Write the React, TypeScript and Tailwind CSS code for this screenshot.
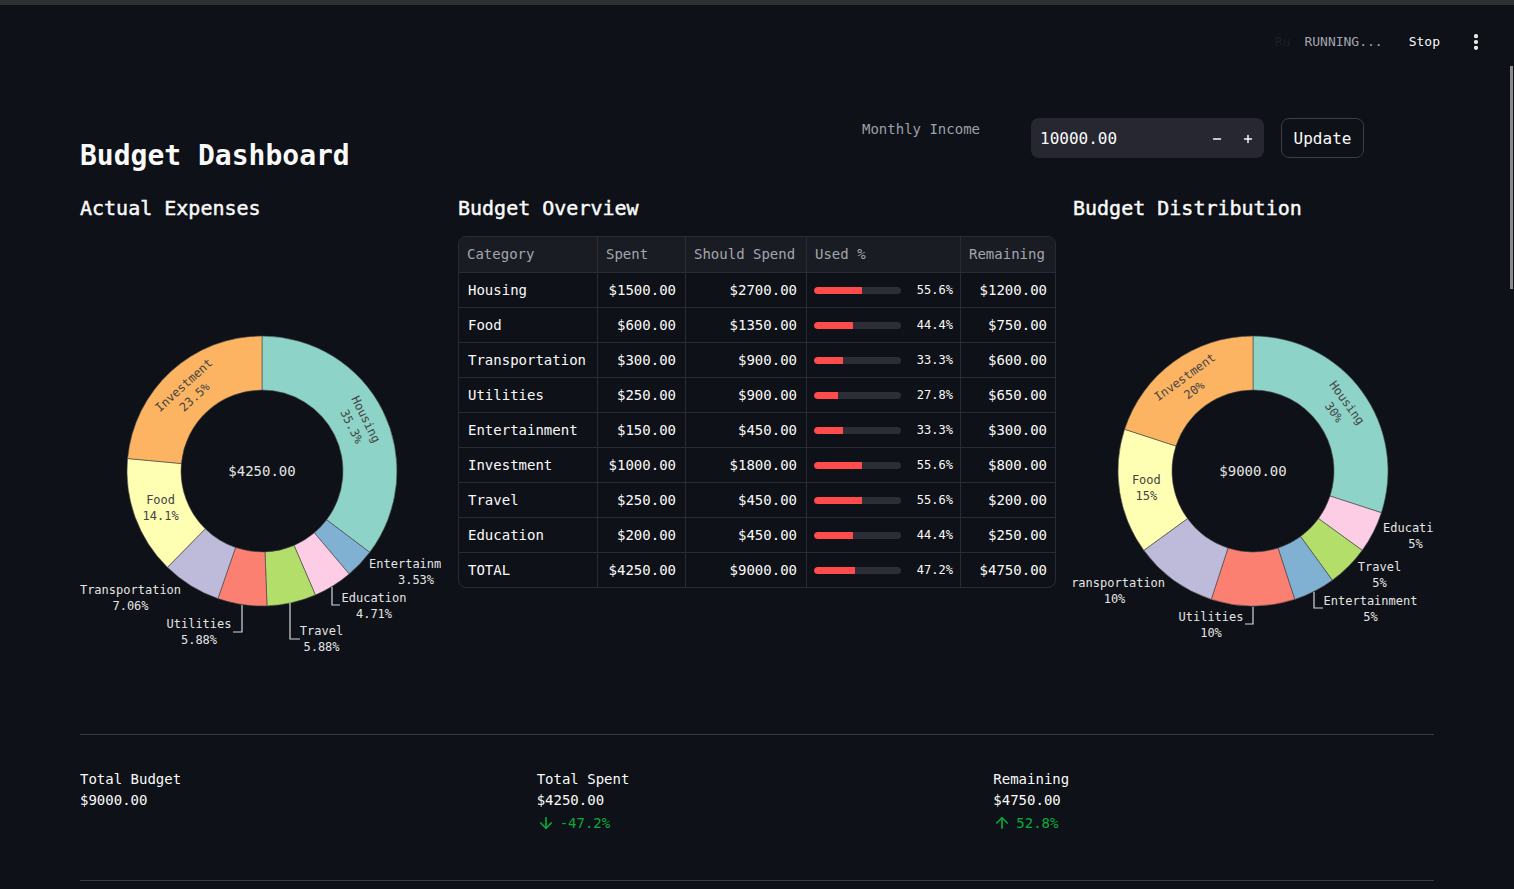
import { ArrowDown, ArrowUp, EllipsisVertical, Minus, Plus } from "lucide-react";

const COLORS: Record<string, string> = {
  Housing: "#8dd3c7",
  Food: "#ffffb3",
  Transportation: "#bebada",
  Utilities: "#fb8072",
  Entertainment: "#80b1d3",
  Investment: "#fdb462",
  Travel: "#b3de69",
  Education: "#fccde5",
};

type Slice = { name: string; value: number };
type OutLabel = { x: number; y: number; lines: [string, string] };
type InLabel = { name: string; horizontal?: boolean; lines: [string, string] };

interface DonutProps {
  cx: number;
  cy: number;
  slices: Slice[];
  center: string;
  inside: InLabel[];
  outside: OutLabel[];
  leaders: string[];
}

const R_OUT = 135;
const R_IN = 81;

function pt(cx: number, cy: number, r: number, deg: number) {
  const a = (deg * Math.PI) / 180;
  return [cx + r * Math.sin(a), cy - r * Math.cos(a)];
}

function arcPath(cx: number, cy: number, a0: number, a1: number) {
  const large = a1 - a0 > 180 ? 1 : 0;
  const [x0, y0] = pt(cx, cy, R_OUT, a0);
  const [x1, y1] = pt(cx, cy, R_OUT, a1);
  const [x2, y2] = pt(cx, cy, R_IN, a1);
  const [x3, y3] = pt(cx, cy, R_IN, a0);
  return `M${x0} ${y0} A${R_OUT} ${R_OUT} 0 ${large} 1 ${x1} ${y1} L${x2} ${y2} A${R_IN} ${R_IN} 0 ${large} 0 ${x3} ${y3} Z`;
}

function Donut({ cx, cy, slices, center, inside, outside, leaders }: DonutProps) {
  const total = slices.reduce((s, x) => s + x.value, 0);
  let acc = 0;
  const arcs = slices.map((s) => {
    const a0 = (acc / total) * 360;
    acc += s.value;
    const a1 = (acc / total) * 360;
    return { ...s, a0, a1 };
  });

  return (
    <svg className="w-full h-[470px]" fontSize={12}>
      {arcs.map((a) => (
        <path
          key={a.name}
          d={arcPath(cx, cy, a.a0, a.a1)}
          fill={COLORS[a.name]}
          stroke="#4a4a4a"
          strokeWidth={0.6}
        />
      ))}
      {inside.map((l) => {
        const a = arcs.find((x) => x.name === l.name)!;
        const mid = (a.a0 + a.a1) / 2;
        const [x, y] = pt(cx, cy, (R_OUT + R_IN) / 2, mid);
        const rot = l.horizontal ? 0 : mid > 180 ? mid - 360 : mid;
        return (
          <text
            key={l.name}
            transform={`translate(${x} ${y}) rotate(${rot})`}
            textAnchor="middle"
            fill="#444"
            dominantBaseline="central"
          >
            <tspan x={0} y={-8}>{l.lines[0]}</tspan>
            <tspan x={0} y={8}>{l.lines[1]}</tspan>
          </text>
        );
      })}
      {leaders.map((p) => (
        <polyline key={p} points={p} fill="none" stroke="#d8d8d8" strokeWidth={1.2} />
      ))}
      {outside.map((l) => (
        <text key={l.lines[0]} textAnchor="middle" fill="#e4e4e4" dominantBaseline="central">
          <tspan x={l.x} y={l.y}>{l.lines[0]}</tspan>
          <tspan x={l.x} y={l.y + 16}>{l.lines[1]}</tspan>
        </text>
      ))}
      <text x={cx} y={cy} textAnchor="middle" dominantBaseline="central" fontSize={14} fill="#e4e4e4">
        {center}
      </text>
    </svg>
  );
}

const rows = [
  { cat: "Housing", spent: 1500, should: 2700 },
  { cat: "Food", spent: 600, should: 1350 },
  { cat: "Transportation", spent: 300, should: 900 },
  { cat: "Utilities", spent: 250, should: 900 },
  { cat: "Entertainment", spent: 150, should: 450 },
  { cat: "Investment", spent: 1000, should: 1800 },
  { cat: "Travel", spent: 250, should: 450 },
  { cat: "Education", spent: 200, should: 450 },
  { cat: "TOTAL", spent: 4250, should: 9000 },
];

const money = (n: number) => `$${n.toFixed(2)}`;

function BudgetTable() {
  const cols = "grid grid-cols-[139px_88px_121px_154px_94px]";
  return (
    <div className="border border-[#2a2c34] rounded-lg overflow-hidden text-[14px]">
      <div className={`${cols} h-[35px] bg-[#1a1c23] text-[#a3a6ae]`}>
        <div className="flex items-center px-[8px] border-r border-[#2a2c34]">Category</div>
        <div className="flex items-center px-[8px] border-r border-[#2a2c34]">Spent</div>
        <div className="flex items-center px-[8px] border-r border-[#2a2c34]">Should Spend</div>
        <div className="flex items-center px-[8px] border-r border-[#2a2c34]">Used %</div>
        <div className="flex items-center px-[8px]">Remaining</div>
      </div>
      {rows.map((r) => {
        const pct = (r.spent / r.should) * 100;
        return (
          <div key={r.cat} className={`${cols} h-[35px] border-t border-[#2a2c34] text-[#fafafa]`}>
            <div className="flex items-center px-[9px] border-r border-[#2a2c34]">{r.cat}</div>
            <div className="flex items-center justify-end px-[9px] border-r border-[#2a2c34]">{money(r.spent)}</div>
            <div className="flex items-center justify-end px-[9px] border-r border-[#2a2c34]">{money(r.should)}</div>
            <div className="flex items-center px-[7px] border-r border-[#2a2c34]">
              <div className="w-[87px] h-[7px] rounded-full bg-[#2c2e37] overflow-hidden">
                <div className="h-full bg-[#ff4b4b] rounded-l-full" style={{ width: `${pct}%` }} />
              </div>
              <span className="flex-1 text-right text-[12px]">{pct.toFixed(1)}%</span>
            </div>
            <div className="flex items-center justify-end px-[8px]">{money(r.should - r.spent)}</div>
          </div>
        );
      })}
    </div>
  );
}

function Metric({ label, value, delta, up }: { label: string; value: string; delta?: string; up?: boolean }) {
  return (
    <div className="text-[14px] text-[#fafafa]">
      <div className="leading-[20px]">{label}</div>
      <div className="leading-[20px] mt-[1px]">{value}</div>
      {delta && (
        <div className="flex items-center gap-[5px] leading-[20px] mt-[3px] text-[#09ab3b]">
          {up ? <ArrowUp size={18} strokeWidth={2.2} /> : <ArrowDown size={18} strokeWidth={2.2} />}
          <span>{delta}</span>
        </div>
      )}
    </div>
  );
}

export default function App() {
  return (
    <div className="relative h-screen overflow-hidden bg-[#0e1117] text-[#fafafa] font-['DejaVu_Sans_Mono',monospace]">
      <div className="h-[5px] bg-[#2f3034]" />
      <header className="h-[74px] flex items-center justify-end pr-[28px] text-[13px]">
        <span className="text-[#1c1f27] mr-[14px]">Ru</span>
        <span className="text-[#a3a6ae] mr-[26px]">RUNNING...</span>
        <span className="text-[#fafafa] mr-[26px]">Stop</span>
        <EllipsisVertical size={20} strokeWidth={3} className="text-[#fafafa]" />
      </header>

      <main className="px-[80px]">
        <div className="flex mt-[39px]">
          <div className="w-[782px]">
            <h1 className="mt-[21px] text-[28px] leading-[34px] font-bold">Budget Dashboard</h1>
          </div>
          <div className="w-[169px] text-[14px] leading-[20px] text-[#9ca0a9] mt-[1px]">Monthly Income</div>
          <div className="w-[233px] h-[40px] rounded-lg bg-[#262730] flex items-center pl-[9px] pr-[10px] text-[16px] pt-[1px]">
            <span className="flex-1">10000.00</span>
            <Minus size={12} strokeWidth={3} className="mr-[19px]" />
            <Plus size={12} strokeWidth={3} />
          </div>
          <button className="ml-[17px] w-[83px] h-[40px] rounded-lg border border-[#3b3d48] text-[16px] pt-[1px]">
            Update
          </button>
        </div>

        <div className="grid grid-cols-[361px_598px_361px] gap-[17px] mt-[21px]">
          <div>
            <h2 className="text-[20px] leading-[28px] font-normal [-webkit-text-stroke:0.45px_#fafafa]">Actual Expenses</h2>
            <div className="mt-[14px]">
              <Donut
                cx={182}
                cy={235}
                center="$4250.00"
                slices={[
                  { name: "Housing", value: 1500 },
                  { name: "Entertainment", value: 150 },
                  { name: "Education", value: 200 },
                  { name: "Travel", value: 250 },
                  { name: "Utilities", value: 250 },
                  { name: "Transportation", value: 300 },
                  { name: "Food", value: 600 },
                  { name: "Investment", value: 1000 },
                ]}
                inside={[
                  { name: "Housing", lines: ["Housing", "35.3%"] },
                  { name: "Investment", lines: ["Investment", "23.5%"] },
                  { name: "Food", horizontal: true, lines: ["Food", "14.1%"] },
                ]}
                outside={[
                  { x: 336, y: 328, lines: ["Entertainment", "3.53%"] },
                  { x: 294, y: 362, lines: ["Education", "4.71%"] },
                  { x: 241.5, y: 395, lines: ["Travel", "5.88%"] },
                  { x: 119, y: 388, lines: ["Utilities", "5.88%"] },
                  { x: 50.5, y: 354, lines: ["Transportation", "7.06%"] },
                ]}
                leaders={["252,351 252,369 260,369", "210,367 210,403 220,403", "162,369 162,396 153,396"]}
              />
            </div>
          </div>

          <div>
            <h2 className="text-[20px] leading-[28px] font-normal [-webkit-text-stroke:0.45px_#fafafa]">Budget Overview</h2>
            <div className="mt-[14px]">
              <BudgetTable />
            </div>
          </div>

          <div>
            <h2 className="text-[20px] leading-[28px] font-normal [-webkit-text-stroke:0.45px_#fafafa]">Budget Distribution</h2>
            <div className="mt-[14px]">
              <Donut
                cx={180}
                cy={235}
                center="$9000.00"
                slices={[
                  { name: "Housing", value: 2700 },
                  { name: "Education", value: 450 },
                  { name: "Travel", value: 450 },
                  { name: "Entertainment", value: 450 },
                  { name: "Utilities", value: 900 },
                  { name: "Transportation", value: 900 },
                  { name: "Food", value: 1350 },
                  { name: "Investment", value: 1800 },
                ]}
                inside={[
                  { name: "Housing", lines: ["Housing", "30%"] },
                  { name: "Investment", lines: ["Investment", "20%"] },
                  { name: "Food", horizontal: true, lines: ["Food", "15%"] },
                ]}
                outside={[
                  { x: 342.5, y: 292, lines: ["Education", "5%"] },
                  { x: 306.5, y: 331, lines: ["Travel", "5%"] },
                  { x: 297.5, y: 365, lines: ["Entertainment", "5%"] },
                  { x: 138, y: 381, lines: ["Utilities", "10%"] },
                  { x: 41.5, y: 347, lines: ["Transportation", "10%"] },
                ]}
                leaders={["241,356 241,372 250,372", "180,371 180,388 172,388"]}
              />
            </div>
          </div>
        </div>

        <hr className="mt-[28px] border-0 border-t border-[#3a3c44]" />
        <div className="grid grid-cols-3 gap-4 pt-[34px] pb-[47px]">
          <Metric label="Total Budget" value="$9000.00" />
          <Metric label="Total Spent" value="$4250.00" delta="-47.2%" />
          <Metric label="Remaining" value="$4750.00" delta="52.8%" up />
        </div>
        <hr className="border-0 border-t border-[#3a3c44]" />
      </main>

      <div className="absolute right-[1px] top-[66px] w-[3px] h-[223px] bg-[#8a8a8a]" />
    </div>
  );
}
